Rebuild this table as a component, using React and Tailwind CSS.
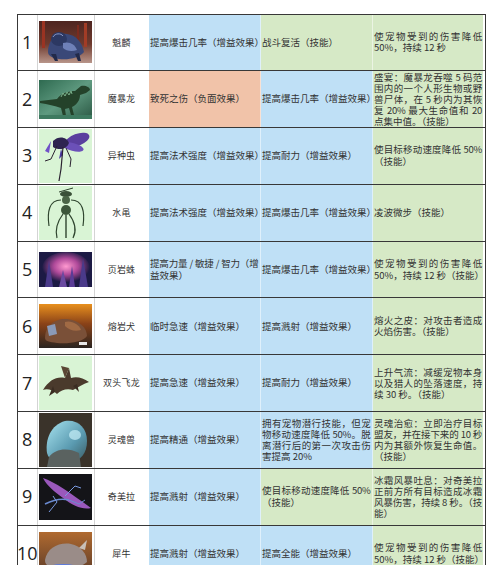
import React from "react";

const TONE = {
  b: "bg-[#bfe0f6]",
  g: "bg-[#d6e9c6]",
  r: "bg-[#f1c3a9]",
};

// pet thumbnails, rough drawings of the original screenshots
function Pic1() {
  return (
    <svg width="53" height="42" viewBox="0 0 53 42">
      <defs>
        <linearGradient id="g1" x1="0" y1="0" x2="0" y2="1">
          <stop offset="0" stopColor="#4e2520" />
          <stop offset="0.55" stopColor="#6e3a2e" />
          <stop offset="1" stopColor="#b8958a" />
        </linearGradient>
      </defs>
      <rect width="53" height="42" fill="url(#g1)" />
      <rect x="3" y="0" width="3" height="27" fill="#9a3322" />
      <rect x="45" y="2" width="3" height="24" fill="#a23c26" />
      <rect x="38" y="4" width="2" height="20" fill="#7a2a1e" />
      <path d="M9 31 C9 19 17 11 28 13 C37 14 43 21 45 31 C40 37 30 39 20 38 C14 37 9 35 9 31Z" fill="#3a4878" />
      <ellipse cx="20" cy="18" rx="8" ry="7" fill="#2c3862" />
      <path d="M24 22 C30 20 36 23 38 29 C33 31 27 30 24 27Z" fill="#6e80b8" />
      <path d="M14 16 C16 12 22 12 24 15" stroke="#8a98c8" strokeWidth="1" fill="none" />
      <path d="M12 33 L16 40 L19 40 L17 33Z" fill="#222a4a" />
      <path d="M36 33 L39 40 L42 40 L40 32Z" fill="#222a4a" />
    </svg>
  );
}

function Pic2() {
  return (
    <svg width="53" height="39" viewBox="0 0 53 39">
      <defs>
        <linearGradient id="g2" x1="0" y1="0" x2="1" y2="1">
          <stop offset="0" stopColor="#2e6a50" />
          <stop offset="0.5" stopColor="#5f9a80" />
          <stop offset="1" stopColor="#2b5844" />
        </linearGradient>
      </defs>
      <rect width="53" height="39" fill="url(#g2)" />
      <path d="M1 21 L18 19 C22 13 30 11 36 11 L42 6 C46 5 51 7 51 10 L47 13 L41 15 C41 21 37 25 33 27 L35 35 L32 35 L30 28 L26 29 L27 36 L24 36 L22 28 C16 26 9 24 1 23Z" fill="#24422a" />
      <path d="M22 17 L24 13 L26 16 L28 12 L30 15 L32 11 L33 14" stroke="#7ab08a" strokeWidth="1" fill="none" />
      <rect x="0" y="35" width="53" height="4" fill="#3e7a60" />
    </svg>
  );
}

function Pic3() {
  return (
    <svg width="53" height="54" viewBox="0 0 53 54">
      <rect width="53" height="54" fill="#d9f4d5" />
      <ellipse cx="38" cy="11" rx="13" ry="6" transform="rotate(-20 38 11)" fill="#5a3f9e" />
      <ellipse cx="34" cy="18" rx="11" ry="4" transform="rotate(15 34 18)" fill="#6b50b8" />
      <path d="M14 12 C20 6 28 8 30 14 C28 20 20 22 14 18Z" fill="#2e2450" />
      <path d="M6 22 L12 12 L10 24Z" fill="#7050c8" />
      <path d="M22 20 L24 26 L20 30Z" fill="#4a38a0" />
      <path d="M24 18 L22 40 L20 52" stroke="#2a2230" strokeWidth="1.2" fill="none" />
      <path d="M18 17 L12 30 L6 32" stroke="#2a2230" strokeWidth="1" fill="none" />
      <path d="M27 19 L32 30 L31 38" stroke="#2a2230" strokeWidth="1" fill="none" />
    </svg>
  );
}

function Pic4() {
  return (
    <svg width="53" height="54" viewBox="0 0 53 54">
      <rect width="53" height="54" fill="#d9f4d5" />
      <ellipse cx="27" cy="8" rx="6" ry="3" fill="#3a5038" />
      <path d="M20 6 L34 2" stroke="#2e422e" strokeWidth="1" />
      <ellipse cx="27" cy="14" rx="4" ry="4" fill="#4a6446" />
      <ellipse cx="27" cy="24" rx="5" ry="5" fill="#3c563a" />
      <path d="M22 14 C10 14 8 26 10 40" stroke="#2e442e" strokeWidth="1.2" fill="none" />
      <path d="M32 14 C44 14 46 26 44 40" stroke="#2e442e" strokeWidth="1.2" fill="none" />
      <path d="M24 28 C18 36 16 44 18 52" stroke="#2e442e" strokeWidth="1.2" fill="none" />
      <path d="M30 28 C36 36 38 44 34 52" stroke="#2e442e" strokeWidth="1.2" fill="none" />
      <path d="M27 29 L27 52" stroke="#2e442e" strokeWidth="1.4" />
    </svg>
  );
}

function Pic5() {
  return (
    <svg width="53" height="35" viewBox="0 0 53 35">
      <defs>
        <radialGradient id="g5" cx="0.5" cy="0.45" r="0.5">
          <stop offset="0" stopColor="#ff9ad0" />
          <stop offset="0.5" stopColor="#b04a9a" />
          <stop offset="1" stopColor="#1c1a44" />
        </radialGradient>
      </defs>
      <rect width="53" height="35" fill="#1c1a44" />
      <ellipse cx="27" cy="16" rx="24" ry="16" fill="url(#g5)" />
      <path d="M6 35 L10 8 L14 35Z" fill="#4a3a8a" />
      <path d="M40 35 L44 6 L49 35Z" fill="#4a3a8a" />
      <path d="M20 35 L24 18 L28 35Z" fill="#6a4aa0" />
      <path d="M30 35 L33 14 L36 35Z" fill="#5a3c96" />
    </svg>
  );
}

function Pic6() {
  return (
    <svg width="53" height="44" viewBox="0 0 53 44">
      <defs>
        <linearGradient id="g6" x1="0" y1="0" x2="0" y2="1">
          <stop offset="0" stopColor="#e8901e" />
          <stop offset="0.45" stopColor="#8a4218" />
          <stop offset="1" stopColor="#2a2420" />
        </linearGradient>
      </defs>
      <rect width="53" height="44" fill="url(#g6)" />
      <path d="M6 34 C6 22 16 14 28 15 C40 16 48 24 48 32 C44 38 30 40 18 39 C10 38 6 37 6 34Z" fill="#7a5038" />
      <path d="M8 22 L16 20 L18 30 L10 32Z" fill="#8a9ab8" />
      <path d="M26 18 C32 16 40 20 42 26 C36 28 30 26 26 22Z" fill="#a06a44" />
      <rect x="40" y="38" width="8" height="3" fill="#e8e8e8" />
    </svg>
  );
}

function Pic7() {
  return (
    <svg width="53" height="54" viewBox="0 0 53 54">
      <rect width="53" height="54" fill="#d9f4d5" />
      <path d="M4 34 C10 24 18 20 26 22 L30 12 L32 22 C38 20 44 22 50 26 C44 28 38 32 34 34 C28 32 22 34 18 38 C14 34 8 32 4 34Z" fill="#4a3a2c" />
      <path d="M26 22 L22 10 L30 12Z" fill="#5a4634" />
      <path d="M14 30 L10 40 L16 36Z" fill="#3a2c22" />
      <path d="M34 30 L40 36 L38 28Z" fill="#3a2c22" />
    </svg>
  );
}

function Pic8() {
  return (
    <svg width="53" height="54" viewBox="0 0 53 54">
      <defs>
        <linearGradient id="g8" x1="0" y1="0" x2="1" y2="1">
          <stop offset="0" stopColor="#a8e4f0" />
          <stop offset="0.6" stopColor="#5a9ab0" />
          <stop offset="1" stopColor="#3a5a60" />
        </linearGradient>
      </defs>
      <rect width="53" height="54" fill="#3a332a" />
      <path d="M8 40 C6 26 12 12 26 8 C38 6 48 14 48 28 C48 40 42 48 30 50 C18 50 10 48 8 40Z" fill="url(#g8)" />
      <path d="M10 44 C16 36 28 34 40 40 L42 54 L8 54Z" fill="#5a6260" />
      <ellipse cx="36" cy="22" rx="6" ry="5" fill="#c8f0f8" opacity="0.7" />
    </svg>
  );
}

function Pic9() {
  return (
    <svg width="53" height="46" viewBox="0 0 53 46">
      <rect width="53" height="46" fill="#141418" />
      <path d="M4 4 C16 8 30 18 52 34 C44 36 34 32 24 24 C16 18 8 12 4 4Z" fill="#9a58bc" />
      <path d="M6 30 C14 26 22 24 30 26" stroke="#6a8ad0" strokeWidth="1.5" fill="none" />
      <path d="M10 38 L18 28 L14 22" stroke="#7a9ae0" strokeWidth="1" fill="none" />
      <path d="M26 22 L36 12 L42 14" stroke="#7a9ae0" strokeWidth="1" fill="none" />
      <path d="M30 26 L40 30 L46 26" stroke="#6a8ad0" strokeWidth="1" fill="none" />
    </svg>
  );
}

function Pic10() {
  return (
    <svg width="53" height="44" viewBox="0 0 53 44">
      <defs>
        <linearGradient id="g10" x1="0" y1="0" x2="0" y2="1">
          <stop offset="0" stopColor="#b06a30" />
          <stop offset="1" stopColor="#5a3a28" />
        </linearGradient>
      </defs>
      <rect width="53" height="44" fill="url(#g10)" />
      <path d="M6 28 C8 16 20 10 32 12 C42 14 48 22 48 30 C42 36 26 38 14 36 C8 34 6 32 6 28Z" fill="#9a8c88" />
      <path d="M40 16 L48 8 L46 18Z" fill="#c8c0b8" />
      <ellipse cx="24" cy="36" rx="16" ry="4" fill="#5a7ae0" />
    </svg>
  );
}

const rows = [
  { n: 1, name: "魁麟", Pic: Pic1, c3: ["提高爆击几率（增益效果）"], t3: "b", c4: ["战斗复活（技能）"], t4: "g", c5: ["使宠物受到的伤害降低", "50%，持续 12 秒"] },
  { n: 2, name: "魔暴龙", Pic: Pic2, c3: ["致死之伤（负面效果）"], t3: "r", c4: ["提高爆击几率（增益效果）"], t4: "b", c5: ["盛宴：魔暴龙吞噬 5 码范", "围内的一个人形生物或野", "兽尸体，在 5 秒内为其恢", "复 20% 最大生命值和 20", "点集中值。（技能）"] },
  { n: 3, name: "异种虫", Pic: Pic3, c3: ["提高法术强度（增益效果）"], t3: "b", c4: ["提高耐力（增益效果）"], t4: "b", c5: ["使目标移动速度降低 50%", "（技能）"] },
  { n: 4, name: "水黾", Pic: Pic4, c3: ["提高法术强度（增益效果）"], t3: "b", c4: ["提高爆击几率（增益效果）"], t4: "b", c5: ["凌波微步（技能）"] },
  { n: 5, name: "页岩蛛", Pic: Pic5, c3: ["提高力量 / 敏捷 / 智力（增", "益效果）"], t3: "b", c4: ["提高爆击几率（增益效果）"], t4: "b", c5: ["使宠物受到的伤害降低", "50%，持续 12 秒（技能）"] },
  { n: 6, name: "熔岩犬", Pic: Pic6, c3: ["临时急速（增益效果）"], t3: "b", c4: ["提高溅射（增益效果）"], t4: "b", c5: ["熔火之皮：对攻击者造成", "火焰伤害。（技能）"] },
  { n: 7, name: "双头飞龙", Pic: Pic7, c3: ["提高急速（增益效果）"], t3: "b", c4: ["提高耐力（增益效果）"], t4: "b", c5: ["上升气流：减缓宠物本身", "以及猎人的坠落速度，持", "续 30 秒。（技能）"] },
  { n: 8, name: "灵魂兽", Pic: Pic8, c3: ["提高精通（增益效果）"], t3: "b", c4: ["拥有宠物潜行技能，但宠", "物移动速度降低 50%。脱", "离潜行后的第一次攻击伤", "害提高 20%"], t4: "b", c5: ["灵魂治愈：立即治疗目标", "盟友，并在接下来的 10 秒", "内为其额外恢复生命值。", "（技能）"] },
  { n: 9, name: "奇美拉", Pic: Pic9, c3: ["提高溅射（增益效果）"], t3: "b", c4: ["使目标移动速度降低 50%", "（技能）"], t4: "g", c5: ["冰霜风暴吐息：对奇美拉", "正前方所有目标造成冰霜", "风暴伤害，持续 8 秒。（技", "能）"] },
  { n: 10, name: "犀牛", Pic: Pic10, c3: ["提高溅射（增益效果）"], t3: "b", c4: ["提高全能（增益效果）"], t4: "b", c5: ["使宠物受到的伤害降低", "50%，持续 12 秒（技能）"] },
];

function TextCell({ lines, tone, last }) {
  const multi = lines.length > 1;
  return (
    <div
      className={[
        "flex flex-col justify-center pl-[1.5px] pr-px text-[9.5px] text-[#333]",
        TONE[tone],
        last ? "" : "border-r border-white/50",
        lines.length > 2 ? "leading-[11px]" : "leading-[11.5px]",
      ].join(" ")}
    >
      {lines.map((l, i) => (
        <div
          key={i}
          className={
            multi && i < lines.length - 1
              ? "whitespace-nowrap tracking-[-0.25px] text-justify [text-align-last:justify]"
              : "whitespace-nowrap"
          }
        >
          {l}
        </div>
      ))}
    </div>
  );
}

export default function App() {
  return (
    <div className="bg-white min-h-[565px] pt-[13.5px] pl-[17px] font-['Noto_Sans_CJK_SC','Noto_Sans',sans-serif]">
      <div className="w-[469px] border-t-[1.5px] border-l-[1.5px] border-r-[1.5px] border-[#383838]">
        {rows.map((r) => (
          <div
            key={r.n}
            className="grid grid-cols-[19.5px_57px_54px_112px_112px_110.5px] h-[56.8px] border-b-[1.5px] border-[#383838]"
          >
            <div className="flex items-center justify-center border-r border-[#d4d4d4] font-['Open_Sans',sans-serif] text-[18px] text-[#222]">
              {r.n}
            </div>
            <div className="flex items-center justify-center border-r border-[#d4d4d4]">
              <r.Pic />
            </div>
            <div className="flex items-center justify-center text-[9px] tracking-[0.2px] text-[#333]">{r.name}</div>
            <TextCell lines={r.c3} tone={r.t3} />
            <TextCell lines={r.c4} tone={r.t4} />
            <TextCell lines={r.c5} tone="g" last />
          </div>
        ))}
      </div>
    </div>
  );
}
